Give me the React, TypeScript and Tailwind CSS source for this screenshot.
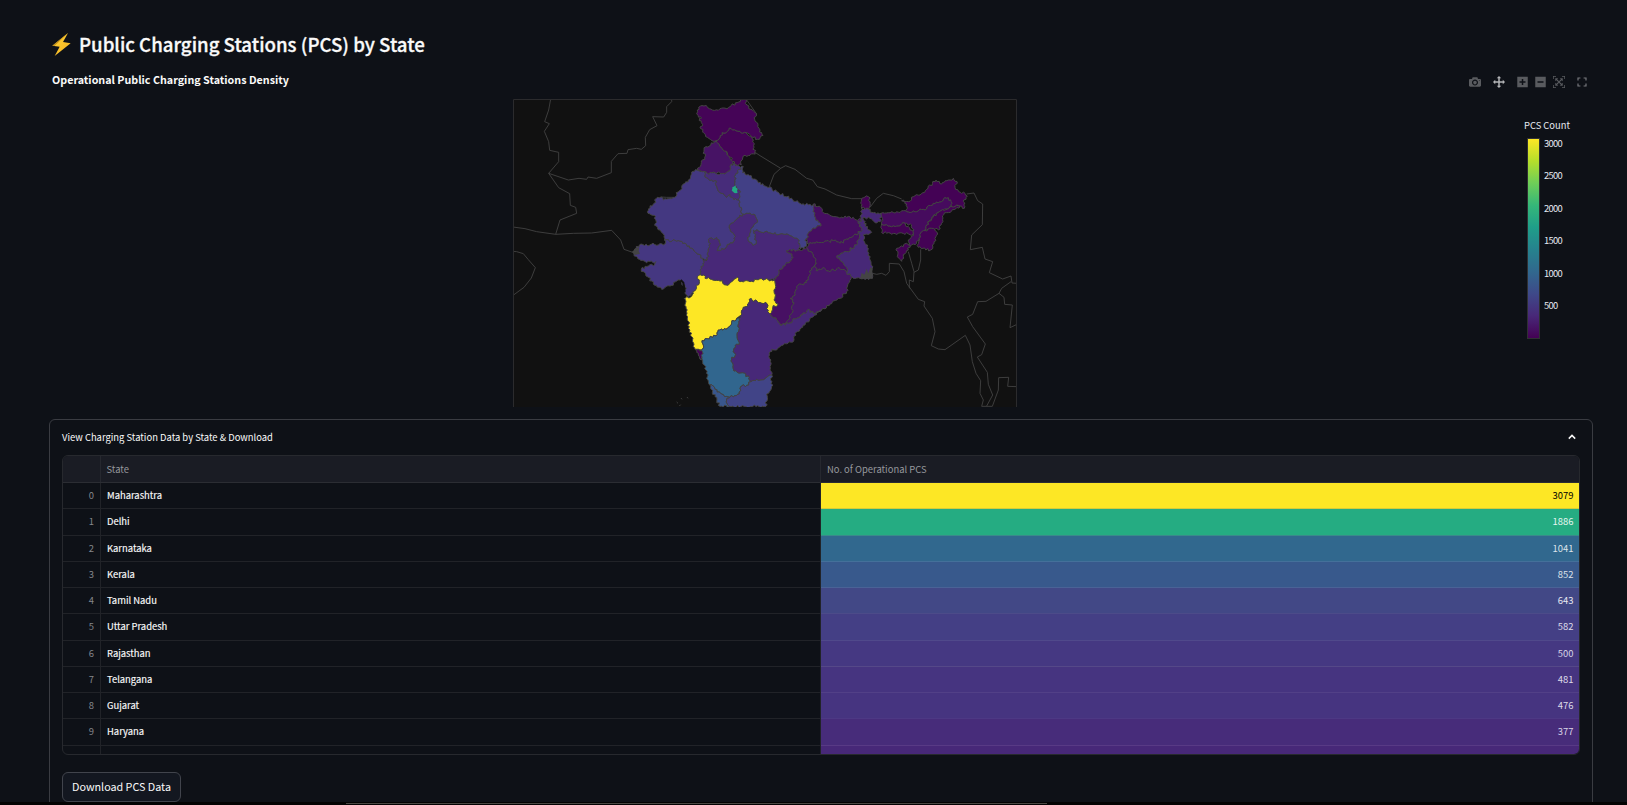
import React from 'react';

type Point = [number, number];

/** Map drawing units: three per pixel. */
const STATES: { name: string; fill: string; points: string }[] = [
  { name: 'Madhya Pradesh', fill: '#482878', points: '622 508 622 490 630 470 625 448 650 442 660 460 652 482 680 470 705 450 700 430 690 418 688 406 710 388 728 372 745 370 765 374 772 390 760 410 750 430 745 452 760 466 768 462 760 420 780 425 810 428 840 432 875 438 898 452 900 480 860 482 880 502 855 528 840 538 828 565 822 570 805 570 785 566 755 574 720 575 712 562 695 575 678 585 660 573 630 567 615 565 612 555 600 554 605 535 610 512' },
  { name: 'Rajasthan', fill: '#443881', points: '592 241 575 246 565 270 545 290 538 302 524 322 505 326 490 330 483 321 472 322 462 340 446 356 444 370 462 376 466 388 464 406 480 420 490 432 494 450 540 454 568 468 585 485 608 505 622 508 622 490 630 470 625 448 650 442 660 460 652 482 680 470 705 450 700 430 690 418 688 406 710 388 728 372 718 350 718 332 700 325 690 314 680 322 664 310 652 296 646 280 648 272 630 272 616 262 612 244' },
  { name: 'Gujarat', fill: '#453781', points: '398 485 418 465 495 462 494 450 540 454 568 468 585 485 608 505 610 512 605 535 600 554 592 560 598 580 585 600 575 610 565 620 560 615 555 590 545 580 540 570 510 588 485 598 460 582 442 560 424 538 445 528 465 522 468 515 440 518 418 508 402 492' },
  { name: 'Uttar Pradesh', fill: '#424086', points: '722 232 730 230 728 248 745 254 755 262 775 278 800 290 830 305 860 320 900 340 940 344 942 358 945 380 963 408 940 414 925 430 918 446 920 460 912 476 900 476 898 452 875 438 840 432 810 428 780 425 760 420 768 462 760 466 745 452 750 430 760 410 772 390 765 374 745 370 728 372 718 350 718 332 716 310 708 290 704 270 708 250' },
  { name: 'Haryana', fill: '#472c7a', points: '612 244 640 248 668 250 690 242 690 230 700 220 712 226 722 232 708 250 704 270 708 290 718 300 716 326 702 330 690 314 680 322 664 310 652 296 646 280 648 272 630 272 616 262' },
  { name: 'Punjab', fill: '#471365', points: '648 154 640 160 618 170 612 184 616 198 604 218 592 240 612 244 622 250 640 246 668 250 688 242 690 230 698 222 690 204 680 184 664 172 654 160' },
  { name: 'Himachal Pradesh', fill: '#450457', points: '648 152 660 142 666 128 682 124 688 114 708 122 720 124 738 128 752 140 760 150 762 172 766 192 750 196 735 196 728 204 724 224 708 224 698 214 692 202 680 184 664 172 654 160' },
  { name: 'Jammu and Kashmir', fill: '#450457', points: '592 60 596 52 612 48 628 56 655 61 690 50 716 36 722 28 738 28 741 45 752 58 768 70 764 88 774 104 780 120 789 136 772 148 752 136 738 128 720 124 708 122 688 114 682 124 666 128 660 142 648 152 636 152 622 142 612 130 602 116 604 98 598 92 605 84 594 76' },
  { name: 'Delhi', fill: '#23a983', points: '697 292 707 286 713 296 713 308 699 305' },
  { name: 'Bihar', fill: '#460e61', points: '940 342 965 355 970 368 1005 380 1040 382 1083 388 1075 400 1085 415 1075 430 1045 448 1020 460 1000 452 970 458 930 458 920 460 922 452 925 430 940 414 963 408 945 380 942 358' },
  { name: 'Jharkhand', fill: '#471063', points: '920 473 930 458 970 458 1000 452 1020 460 1045 448 1075 430 1078 445 1070 465 1040 485 1010 498 1020 510 1040 532 1040 548 1015 532 990 545 970 532 948 542 948 520 940 495' },
  { name: 'Chhattisgarh', fill: '#471063', points: '912 476 920 473 940 495 948 520 935 540 925 560 920 578 890 590 886 615 870 625 882 638 875 670 860 695 840 705 830 690 810 672 818 652 834 642 822 630 823 610 823 570 828 565 840 538 855 528 880 502 860 482 900 480' },
  { name: 'Odisha', fill: '#481769', points: '948 520 948 542 970 532 990 545 1015 532 1040 548 1055 562 1045 580 1040 605 1020 625 990 642 965 660 940 670 925 658 902 675 890 685 865 700 840 705 860 695 875 670 882 638 870 625 886 615 890 590 920 578 925 560 935 540' },
  { name: 'West Bengal', fill: '#472877', points: '1085 355 1105 358 1120 368 1143 370 1140 395 1125 398 1110 385 1090 382 1092 400 1102 415 1115 427 1090 435 1095 460 1105 475 1110 510 1117 535 1117 565 1080 565 1055 560 1040 548 1040 532 1020 510 1010 498 1040 485 1070 465 1078 445 1075 430 1085 415 1075 400 1083 388' },
  { name: 'Sikkim', fill: '#440154', points: '1085 325 1105 320 1110 335 1106 357 1085 354' },
  { name: 'Arunachal Pradesh', fill: '#440255', points: '1205 332 1225 335 1240 320 1260 315 1280 298 1308 270 1325 282 1350 270 1360 265 1372 280 1365 292 1376 305 1395 310 1402 318 1390 335 1393 355 1380 348 1355 352 1352 330 1340 325 1300 340 1275 360 1220 365 1220 342' },
  { name: 'Assam', fill: '#460b5e', points: '1143 370 1165 368 1220 365 1275 360 1300 340 1340 325 1352 330 1355 350 1330 360 1310 370 1290 390 1275 420 1260 435 1250 460 1230 468 1225 450 1240 430 1235 405 1215 400 1180 408 1145 402' },
  { name: 'Meghalaya', fill: '#440255', points: '1145 402 1180 408 1215 400 1225 410 1240 432 1145 428' },
  { name: 'Nagaland', fill: '#440255', points: '1380 350 1340 368 1327 378 1325 400 1315 420 1295 415 1270 425 1280 405 1295 385 1315 368 1355 350' },
  { name: 'Manipur', fill: '#440255', points: '1270 422 1295 415 1313 432 1302 455 1292 480 1255 472 1258 445' },
  { name: 'Tripura', fill: '#440255', points: '1230 460 1225 480 1210 500 1205 514 1192 500 1190 475 1210 470 1220 460' },
  { name: 'Maharashtra', fill: '#fde725', points: '552 626 575 618 578 605 598 580 592 560 600 554 612 555 615 565 630 567 660 573 678 585 695 575 712 562 720 575 755 574 785 566 805 570 823 570 823 610 822 630 834 642 818 652 810 672 803 665 802 642 780 638 748 628 744 648 730 652 726 672 710 685 695 698 678 718 655 720 652 734 622 746 606 752 610 765 604 780 585 778 578 755 570 720 562 685 558 650 553 625' },
  { name: 'Goa', fill: '#440255', points: '586 779 604 780 607 800 604 810 595 795' },
  { name: 'Karnataka', fill: '#31668e', points: '606 752 622 746 652 734 655 720 678 718 695 698 710 685 718 682 717 700 712 728 718 758 702 775 705 798 695 808 700 825 702 843 728 848 748 862 752 875 740 886 722 890 718 912 690 922 665 912 645 898 628 884 622 860 618 840 608 812 607 785 604 780 610 765' },
  { name: 'Kerala', fill: '#39568c', points: '628 884 645 898 665 912 690 922 680 930 688 949 660 949 645 920' },
  { name: 'Tamil Nadu', fill: '#414487', points: '690 922 718 912 722 890 740 886 752 875 780 870 800 862 815 855 815 890 800 912 798 949 688 949 680 930' },
  { name: 'Andhra Pradesh and Telangana', fill: '#472878', points: '718 685 726 672 730 652 744 648 748 628 780 638 802 642 803 665 810 672 830 690 840 705 865 700 890 685 902 675 925 658 940 670 965 660 940 680 915 705 885 730 882 750 850 765 830 780 815 778 808 795 810 830 815 855 800 862 780 870 752 875 748 862 728 848 702 843 700 825 695 808 705 798 702 775 718 758 712 728 717 700' },
];

const BORDERS = [
  '152 27 146 60 134 95 148 101 133 124 146 155 149 181 176 187 176 215 146 250 205 270 237 265 260 268 264 261 290 265 334 248 334 214 354 191 381 190 384 179 410 175 424 178 437 167 436 142 449 119 471 107 458 80 491 81 500 67 500 50 515 35 515 27',
  '146 250 176 293 209 311 211 346 227 352 230 370 180 390 167 433',
  '39 411 75 416 110 425 167 433 220 430 275 429 335 421 362 450 372 478 398 487',
  '39 484 50 485 70 491 85 509 106 533 94 564 72 592 42 614',
  '738 27 770 72',
  '483 321 500 322 524 322',
  '592 241 560 280',
  '762 185 780 197 842 235 857 227 885 238 920 265 938 270 952 290 975 297 1010 315 1055 326 1084 326',
  '842 235 822 253 808 290',
  '1110 352 1130 325 1150 310 1180 317 1205 327',
  '1400 312 1422 309 1433 332 1448 342 1447 404 1415 435 1411 479 1447 472 1455 507 1478 515 1468 548 1508 567 1533 558 1536 579 1551 580',
  '1533 575 1505 595 1497 610 1458 634 1433 635 1418 673 1402 681 1418 710 1456 762 1445 794 1432 801 1462 847 1465 883 1478 915 1460 948',
  '1497 610 1512 622 1514 643 1537 645 1530 713 1551 703',
  '1117 550 1130 553 1145 550 1158 556 1168 545 1168 520 1198 522 1212 545 1220 580 1255 628 1274 635 1272 648 1297 685 1305 725 1294 767 1315 777 1335 779 1396 736 1410 765 1417 815 1428 850 1442 872 1440 910 1450 930 1445 949 1477 949 1495 900 1496 863 1526 862 1523 889 1551 890',
  '1225 485 1235 520 1242 545 1240 575 1228 570 1228 595',
  '1262 478 1262 510 1255 540 1242 547',
  '1090 382 1083 395 1100 402',
  '530 936 534 940',
  '543 924 546 928',
  '561 921 564 925',
  '538 948 542 944',
];

function parse(source: string): Point[] {
  const n = source.split(' ').map(Number);
  const out: Point[] = [];
  for (let i = 0; i < n.length; i += 2) out.push([n[i], n[i + 1]]);
  return out;
}

function noise(a: number, b: number, k: number) {
  const s = Math.sin(a * 12.9898 + b * 78.233 + k * 37.719) * 43758.5453;
  return (s - Math.floor(s)) * 2 - 1;
}

/** Splits an edge into short jagged pieces; both neighbours of a shared edge get the same result. */
function jag(p: Point, q: Point): Point[] {
  const swap = p[0] > q[0] || (p[0] === q[0] && p[1] > q[1]);
  const [a, b] = swap ? [q, p] : [p, q];
  const dx = b[0] - a[0];
  const dy = b[1] - a[1];
  const len = Math.hypot(dx, dy) || 1;
  const steps = Math.max(1, Math.round(len / 5));
  const mid: Point[] = [];
  for (let i = 1; i < steps; i++) {
    const off = noise(a[0] + b[0], a[1] + b[1], i) * 4.2;
    mid.push([a[0] + (dx * i) / steps - (dy / len) * off, a[1] + (dy * i) / steps + (dx / len) * off]);
  }
  return swap ? mid.reverse() : mid;
}

function region(source: string) {
  const pts = parse(source);
  const all = pts.flatMap((p, i) => [p, ...jag(p, pts[(i + 1) % pts.length])]);
  return 'M' + all.map(([x, y]) => `${x.toFixed(1)} ${y.toFixed(1)}`).join('L') + 'Z';
}

function IndiaMap() {
  return (
    <svg className="block h-[308px] w-[504px]" viewBox="39 27 1512 924">
      <rect x="39" y="27" width="1512" height="924" fill="#111111" />
      <g fill="none" stroke="#444444" strokeWidth="2.6" strokeLinejoin="round">
        {BORDERS.map((b) => (
          <polyline key={b} points={b} />
        ))}
      </g>
      <g stroke="#444444" strokeWidth="3" strokeLinejoin="round">
        {STATES.map((s) => (
          <path key={s.name} d={region(s.points)} fill={s.fill} stroke={s.name === 'Delhi' ? 'none' : undefined} />
        ))}
      </g>
      <path d="M542 570l8 8 4 28" fill="none" stroke="#111111" strokeWidth="6" />
      <path d="M1080 566l5-18 8 6 7-18 5 14 7-20 5 8v28z" fill="#444444" />
      <path d="M396 487l10-12 12-4-2 12 4 8-14 4z" fill="#444444" />
      <path d="M40.5 951V28.5H1549.5V951" fill="none" stroke="#2b2b2d" strokeWidth="3" />
    </svg>
  );
}

const MODEBAR: { name: string; box: string; shift: number; cls: string; d: string }[] = [
  { name: 'camera', box: '0 0 1000 1000', shift: 850, cls: 'w-3 h-3 fill-[#595b5f]', d: 'm500 450c-83 0-150-67-150-150 0-83 67-150 150-150 83 0 150 67 150 150 0 83-67 150-150 150z m400 150h-120c-16 0-34 13-39 29l-31 93c-6 15-23 28-40 28h-340c-16 0-34-13-39-28l-31-94c-6-15-23-28-40-28h-120c-55 0-100-45-100-100v-450c0-55 45-100 100-100h800c55 0 100 45 100 100v450c0 55-45 100-100 100z m-400-550c-138 0-250 112-250 250 0 138 112 250 250 250 138 0 250-112 250-250 0-138-112-250-250-250z m365 380c-19 0-35 16-35 35 0 19 16 35 35 35 19 0 35-16 35-35 0-19-16-35-35-35z' },
  { name: 'pan', box: '0 0 1000 1000', shift: 850, cls: 'ml-3 w-3 h-3 fill-[#b4b5b8]', d: 'm1000 350l-187 188 0-125-250 0 0 250 125 0-188 187-187-187 125 0 0-250-250 0 0 125-188-188 186-187 0 125 252 0 0-250-125 0 187-188 188 188-125 0 0 250 250 0 0-126 187 188z' },
  { name: 'zoom-in', box: '0 0 875 1000', shift: 850, cls: 'ml-3 w-[11px] h-3 fill-[#595b5f]', d: 'm1 787l0-875 875 0 0 875-875 0z m687-500l-187 0 0-187-125 0 0 187-188 0 0 125 188 0 0 187 125 0 0-187 187 0 0-125z' },
  { name: 'zoom-out', box: '0 0 875 1000', shift: 850, cls: 'ml-[7px] w-[11px] h-3 fill-[#595b5f]', d: 'm0 788l0-876 875 0 0 876-875 0z m688-500l-500 0 0 125 500 0 0-125z' },
  { name: 'autoscale', box: '0 0 1000 1000', shift: 850, cls: 'ml-[7px] w-3 h-3 fill-[#595b5f]', d: 'm250 850l-187 0-63 0 0-62 0-188 63 0 0 188 187 0 0 62z m688 0l-188 0 0-62 188 0 0-188 62 0 0 188 0 62-62 0z m-875-938l0 188-63 0 0-188 0-62 63 0 187 0 0 62-187 0z m875 188l0-188-188 0 0-62 188 0 62 0 0 62 0 188-62 0z m-125 188l-1 0-93-94-156 156 156 156 92-93 2 0 0 250-250 0 0-2 93-92-156-156-156 156 94 92 0 2-250 0 0-250 0 0 93 93 157-156-157-156-93 94 0 0 0-250 250 0 0 0-94 93 156 157 156-157-93-93 0 0 250 0 0 250z' },
];

const TICKS = ['3000', '2500', '2000', '1500', '1000', '500'];

const ROWS: [string, string, string][] = [
  ['Maharashtra', '3079', 'bg-[#fde725] text-black border-[#d6cb3a]'],
  ['Delhi', '1886', 'bg-[#25ac82] text-[#e6f5f0] border-[#3a8a8a]'],
  ['Karnataka', '1041', 'bg-[#31688e] text-[#dde4ea] border-[#44709a]'],
  ['Kerala', '852', 'bg-[#38598c] text-[#dde2ea] border-[#4a6296]'],
  ['Tamil Nadu', '643', 'bg-[#424886] text-[#e8e9f0] border-[#4c4b89]'],
  ['Uttar Pradesh', '582', 'bg-[#443f85] text-[#dddce8] border-[#50498b]'],
  ['Rajasthan', '500', 'bg-[#453882] text-[#d8d6e6] border-[#554888]'],
  ['Telangana', '481', 'bg-[#463480] text-[#dddbe8] border-[#524087]'],
  ['Gujarat', '476', 'bg-[#463480] text-[#dddbe8] border-[#4d3884]'],
  ['Haryana', '377', 'bg-[#472c7a] text-[#dad5e6] border-[#583a85]'],
];

export default function App() {
  return (
    <div
      className="flex h-[805px] w-[1627px] flex-col overflow-hidden bg-[#0e1117] text-[#fafafa]"
      style={{ fontFamily: '"Noto Sans CJK SC", "Noto Sans", sans-serif' }}
    >
      <div className="flex h-[802px] flex-none flex-col overflow-hidden pl-[49px] pr-[34px] pt-[29px]">
        <h1 className="flex h-[30px] items-center pl-[3px] text-[18.65px] font-medium leading-[30px] [-webkit-text-stroke:0.3px_#fafafa]">
          <svg className="mr-[8px] mt-px h-[23px] w-[19px]" viewBox="0 0 57 69">
            <defs>
              <linearGradient id="bolt" x1="0" y1="0" x2="1" y2="1">
                <stop offset="0" stopColor="#fdd23a" />
                <stop offset="1" stopColor="#f6b31c" />
              </linearGradient>
            </defs>
            <path d="M48 0L1 38l22 3L8 69l48-38-23-4z" fill="url(#bolt)" />
            <path d="M48 0L1 38l6 1z" fill="#b98a1c" />
          </svg>
          Public Charging Stations (PCS) by State
        </h1>

        <section className="mt-[9px] flex h-[351px] flex-none">
          <div className="w-[464px] pl-[3px] pt-[3px]">
            <h2 className="text-[10.72px] font-bold leading-[18px]">Operational Public Charging Stations Density</h2>
          </div>
          <div className="pt-[31px]">
            <IndiaMap />
          </div>
          <div className="flex flex-1 flex-col items-end pt-[8px]">
            <div className="mr-[6px] flex h-3 items-center">
              {MODEBAR.map((icon) => (
                <svg key={icon.name} className={icon.cls} viewBox={icon.box}>
                  <path d={icon.d} transform={`matrix(1 0 0 -1 0 ${icon.shift})`} />
                </svg>
              ))}
              <svg className="ml-3 h-[10px] w-[10px]" viewBox="0 0 10 10" fill="none" stroke="#77797d" strokeWidth="1.2">
                <path d="M1 3.4V1h2.4M6.6 1H9v2.4M9 6.6V9H6.6M3.4 9H1V6.6" />
              </svg>
            </div>
            <div className="mr-px mt-[29px] flex w-[68px] flex-col">
              <div className="h-[16px] text-[9.4px] leading-[16px] text-[#e6eaf1]">PCS Count</div>
              <div className="mt-[5px] flex">
                <div className="ml-[3px] h-[201px] w-[13px] flex-none border border-[#2f3033] bg-[linear-gradient(to_top,#440154_0%,#482878_11.1%,#3e4989_22.2%,#31688e_33.3%,#26828e_44.4%,#1f9e89_55.6%,#35b779_66.7%,#6ece58_77.8%,#b5de2b_88.9%,#fde725_100%)]" />
                <div className="-mt-[3px] ml-[4px] flex flex-col gap-[16.4px] text-[9.4px] tracking-[-0.7px] text-[#e6eaf1]">
                  {TICKS.map((t) => (
                    <span key={t} className="h-[16px] leading-[16px]">
                      {t}
                    </span>
                  ))}
                </div>
              </div>
            </div>
          </div>
        </section>

        <section className="h-[420px] flex-none rounded-[6px] border border-[#3a3c42] px-[12px]">
          <header className="flex h-[35px] items-center justify-between pb-px text-[9.42px]">
            <span>View Charging Station Data by State &amp; Download</span>
            <svg className="mr-[3px] h-[10px] w-[10px]" viewBox="0 0 10 10" fill="none" stroke="#fafafa" strokeWidth="1.5">
              <path d="M1.8 6.6L5 3.4l3.2 3.2" />
            </svg>
          </header>
          <div className="h-[300px] overflow-hidden rounded-[6px] border border-[#27292e] text-[9.42px]">
            <div className="flex h-[27px] border-b border-[#2b2d33] bg-[#1a1c24] text-[#96989d]">
              <div className="w-[38px] border-r border-[#26282f]" />
              <div className="flex w-[720px] items-center border-r border-[#26282f] pl-[5.5px]">State</div>
              <div className="flex items-center pl-[6px]">No. of Operational PCS</div>
            </div>
            {ROWS.map(([state, count, tone], i) => (
              <div key={state} className="flex h-[26.25px]">
                <div className="flex w-[38px] items-center justify-end border-b border-r border-[#212328] pb-px pr-[6px] text-[#85878c]">{i}</div>
                <div className="flex w-[720px] items-center border-b border-r border-[#212328] pb-px pl-[6px] [-webkit-text-stroke:0.15px_#fafafa]">{state}</div>
                <div className={`flex flex-1 items-center justify-end border-b pb-px pr-[5.5px] ${tone}`}>{count}</div>
              </div>
            ))}
            <div className="flex h-[26.25px]">
              <div className="w-[38px] border-r border-[#212328]" />
              <div className="w-[720px] border-r border-[#212328]" />
              <div className="flex-1 bg-[#472878]" />
            </div>
          </div>
          <button className="mt-[17px] flex h-[30px] w-[119px] items-center justify-center rounded-[6px] border border-[#41444c] bg-[#131720] text-[10.75px]">
            Download PCS Data
          </button>
        </section>
      </div>
      <div className="flex h-[3px] flex-none bg-[#030303] pt-px">
        <div className="ml-[346px] h-px w-[701px] bg-[#4a4844]" />
      </div>
    </div>
  );
}
